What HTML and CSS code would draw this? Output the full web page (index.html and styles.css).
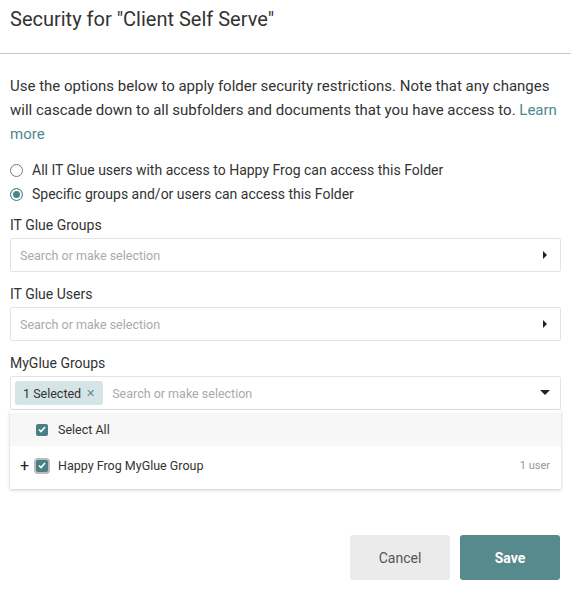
FILE: index.html
```html
<!DOCTYPE html>
<html>
<head>
<meta charset="utf-8">
<link rel="stylesheet" href="styles.css">
</head>
<body>
<div class="modal">
  <div class="header">
    <h1 class="title">Security for "Client Self Serve"</h1>
  </div>
  <div class="body">
    <p class="intro">Use the options below to apply folder security restrictions. Note that any changes will cascade down to all subfolders and documents that you have access to. <a class="link" href="#">Learn more</a></p>
    <div class="radios">
      <label class="radio"><span class="circle"></span>All IT Glue users with access to Happy Frog can access this Folder</label>
      <label class="radio"><span class="circle checked"></span>Specific groups and/or users can access this Folder</label>
    </div>
    <div class="field">
      <div class="label">IT Glue Groups</div>
      <div class="select">
        <span class="placeholder">Search or make selection</span>
        <svg class="caret" width="6" height="8" viewBox="0 0 6 8"><path d="M1 0 L5 4 L1 8 Z" fill="#222"/></svg>
      </div>
    </div>
    <div class="field">
      <div class="label">IT Glue Users</div>
      <div class="select">
        <span class="placeholder">Search or make selection</span>
        <svg class="caret" width="6" height="8" viewBox="0 0 6 8"><path d="M1 0 L5 4 L1 8 Z" fill="#222"/></svg>
      </div>
    </div>
    <div class="field">
      <div class="label">MyGlue Groups</div>
      <div class="select open">
        <span class="tag">1 Selected <span class="tag-x">✕</span></span>
        <span class="placeholder">Search or make selection</span>
        <svg class="caret-down" width="10" height="6" viewBox="0 0 10 6"><path d="M0 0 L10 0 L5 5 Z" fill="#222"/></svg>
      </div>
      <div class="menu">
        <div class="menu-row all">
          <span class="check"><svg width="8" height="7" viewBox="0 0 8 7"><path d="M1 3.5 L3 5.5 L7 1" stroke="#fff" stroke-width="1.6" fill="none"/></svg></span>
          <span class="menu-text">Select All</span>
        </div>
        <div class="menu-row item">
          <span class="plus">+</span>
          <span class="check focus"><svg width="8" height="7" viewBox="0 0 8 7"><path d="M1 3.5 L3 5.5 L7 1" stroke="#fff" stroke-width="1.6" fill="none"/></svg></span>
          <span class="menu-text grow">Happy Frog MyGlue Group</span>
          <span class="count">1 user</span>
        </div>
      </div>
    </div>
  </div>
  <div class="footer">
    <button class="btn cancel">Cancel</button>
    <button class="btn save">Save</button>
  </div>
</div>
</body>
</html>
```
FILE: styles.css
```css
* { box-sizing: border-box; }
html, body { margin: 0; padding: 0; background: #fff; }
body { font-family: Roboto, "Liberation Sans", sans-serif; color: #333; }
.modal { width: 571px; }
.header { height: 54px; border-bottom: 1px solid #c8c8c8; padding: 6px 10px 0; }
.title { margin: 0; font-size: 20px; font-weight: 400; line-height: 26px; color: #333; }
.body { padding: 20px 10px 0 10px; }
.intro { margin: 0; font-size: 15px; line-height: 24px; color: #333; }
.link { color: #4a8a90; text-decoration: none; }
.radios { display: flex; flex-direction: column; margin-top: 12px; }
.radio { display: flex; align-items: center; font-size: 14px; line-height: 24px; color: #333; }
.circle { width: 13px; height: 13px; border-radius: 50%; border: 1px solid #777; margin-right: 9px; background: #fff; flex: none; }
.circle.checked { border-color: #4a8588; box-shadow: inset 0 0 0 2px #fff; background: #4a8588; }
.field { margin-top: 9px; }
.label { font-size: 14px; line-height: 20px; color: #333; margin-bottom: 3px; }
.field + .field { margin-top: 12px; }
.select { height: 34px; border: 1px solid #e4e4e4; border-radius: 2px; display: flex; align-items: center; padding: 0 12px 0 9px; }
.placeholder { flex: 1; font-size: 12.5px; color: #aaa; }
.caret { flex: none; }
.caret-down { flex: none; margin-right: -2px; }
.select.open { padding-left: 4px; }
.tag { background: #d5e4e6; border-radius: 3px; height: 24px; display: flex; align-items: center; padding: 0 8px 0 8px; font-size: 12.5px; color: #333; margin-right: 9px; }
.tag-x { color: #5a8f94; font-size: 11px; margin-left: 5px; }
.menu { background: #fff; box-shadow: 0 1px 3px rgba(0,0,0,0.22); padding: 3px 0 4px; }
.menu-row { display: flex; align-items: center; font-size: 12.5px; color: #333; }
.menu-row.all { height: 33px; background: #f7f7f7; padding-left: 26px; }
.menu-row.item { height: 39px; padding-left: 10px; padding-right: 11px; }
.check { width: 12px; height: 12px; border-radius: 2px; background: #4a7f84; display: flex; align-items: center; justify-content: center; margin-right: 10px; flex: none; }
.check.focus { box-shadow: 0 0 0 2px #bbb; margin-left: 7px; }
.plus { font-size: 16px; color: #222; width: 9px; line-height: 1; }
.grow { flex: 1; }
.count { font-size: 11px; color: #999; }
.footer { display: flex; justify-content: flex-end; gap: 10px; padding: 46px 11px 0; }
.btn { width: 100px; height: 45px; border: none; border-radius: 3px; font-family: Roboto, "Liberation Sans", sans-serif; font-size: 14px; }
.cancel { background: #ebebeb; color: #555; }
.save { background: #578a8c; color: #fff; font-weight: 700; }
```
